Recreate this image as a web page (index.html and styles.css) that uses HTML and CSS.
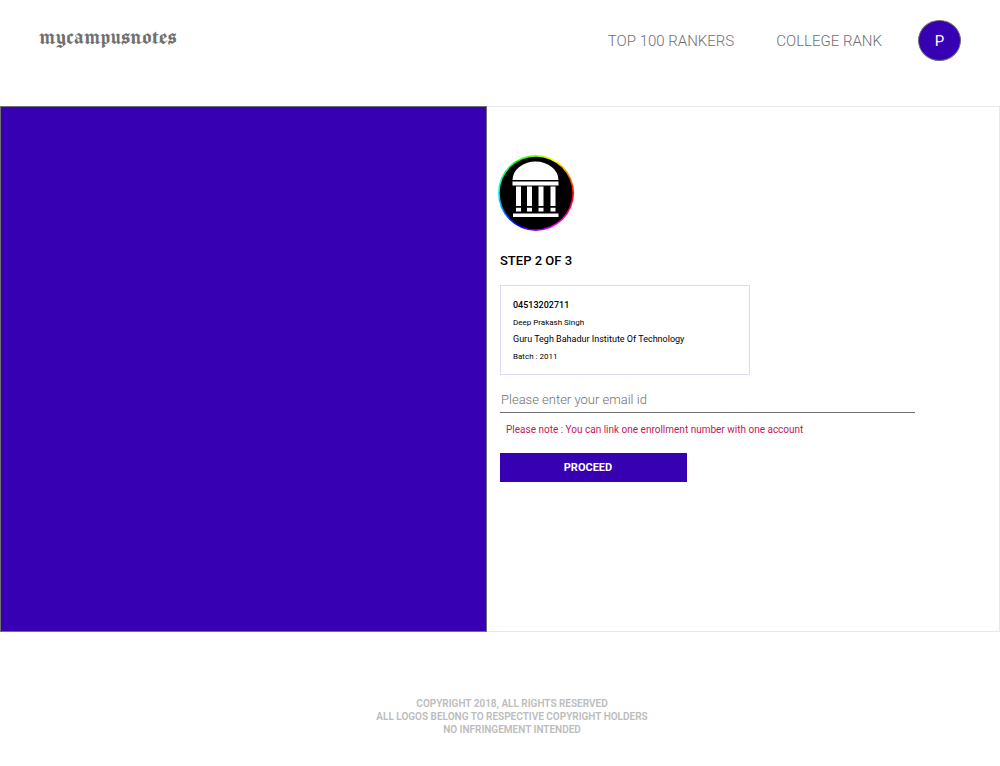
FILE: index.html
```html
<!DOCTYPE html>
<html lang="en">
<head>
<meta charset="utf-8">
<meta name="viewport" content="width=device-width, initial-scale=1">
<title>mycampusnotes</title>
<link rel="stylesheet" href="styles.css">
</head>
<body>
<header class="header">
  <a class="brand" href="#">mycampusnotes</a>
  <nav class="nav">
    <a class="nav-link" href="#">TOP 100 RANKERS</a>
    <a class="nav-link" href="#">COLLEGE RANK</a>
    <button class="avatar" type="button">P</button>
  </nav>
</header>
<main class="main">
  <div class="panel"></div>
  <section class="content">
    <div class="emblem">
      <svg class="emblem-icon" viewBox="0 0 76 76" aria-hidden="true">
        <circle cx="38" cy="38" r="36.300" fill="#000"/>
        <g fill="#fff">
          <path d="M14.500 25A23 18.500 0 0 1 60.500 25Z"/>
          <path d="M14.500 26.500h46v4h-46zM15 58.500h45.500v3.500H15z"/>
          <path d="M18 31.500h5v19.500h-5zM29 31.500h5v19.500h-5zM40.500 31.500h5v19.500h-5zM52.500 31.500h5v19.500h-5z"/>
          <path d="M18 52.700h5v3.800h-5zM29 52.700h5v3.800h-5zM40.500 52.700h5v3.800h-5zM52.500 52.700h5v3.800h-5z"/>
        </g>
      </svg>
    </div>
    <h1 class="step">STEP 2 OF 3</h1>
    <div class="card">
      <p class="line number">04513202711</p>
      <p class="line small">Deep Prakash Singh</p>
      <p class="line">Guru Tegh Bahadur Institute Of Technology</p>
      <p class="line small">Batch : 2011</p>
    </div>
    <form class="form">
      <input class="email" type="email" aria-label="Email id" placeholder="Please enter your email id">
      <p class="note">Please note : You can link one enrollment number with one account</p>
      <button class="proceed" type="button">PROCEED</button>
    </form>
  </section>
</main>
<footer class="footer">
  <p>COPYRIGHT 2018, ALL RIGHTS RESERVED</p>
  <p>ALL LOGOS BELONG TO RESPECTIVE COPYRIGHT HOLDERS</p>
  <p>NO INFRINGEMENT INTENDED</p>
</footer>
</body>
</html>
```
FILE: styles.css
```css
* {
  box-sizing: border-box;
}

body {
  margin: 0;
  background: #fff;
  color: #000;
  font-family: Roboto, "Liberation Sans", sans-serif;
}

p,
h1 {
  margin: 0;
}

.header {
  display: flex;
  justify-content: space-between;
  align-items: flex-start;
  padding: 20px 39px 45px;
}

.brand {
  padding-top: 4px;
  color: #707070;
  font: 400 25px/24px "Old English Text MT", "Manufacturing Consent", "Pirata One", UnifrakturCook, "Liberation Serif", serif;
  text-decoration: none;
}

.nav {
  display: flex;
  align-items: center;
}

.nav-link {
  margin-right: 42px;
  color: #707070;
  font-size: 15px;
  font-weight: 300;
  line-height: 20px;
  text-decoration: none;
}

.nav-link + .nav-link {
  margin-right: 36px;
}

.avatar {
  width: 43px;
  height: 41px;
  padding: 0;
  border: 1px solid #707070;
  border-radius: 50%;
  background: #3700b3;
  color: #fff;
  font: 400 15px/20px Roboto, sans-serif;
}

.main {
  display: grid;
  grid-template-columns: 487fr 513fr;
  min-height: 526px;
}

.panel {
  border: 1px solid #707070;
  background: #3700b3;
}

.content {
  padding: 48px 84px 48px 13px;
  border: 1px solid #e8e8e8;
  border-left: 0;
}

.emblem {
  width: 76px;
  height: 76px;
  margin-left: -2px;
  border-radius: 50%;
  background: conic-gradient(from 90deg, #f00, #f0f, #00f, #0ff, #0f0, #ff0, #f00);
}

.emblem-icon {
  display: block;
}

.step {
  margin: 20px 0 15px;
  font-size: 13px;
  font-weight: 500;
  line-height: 19px;
}

.card {
  width: 250px;
  max-width: 100%;
  padding: 11px 12px 9px;
  border: 1px solid #dedaf2;
}

.line {
  font-size: 9px;
  line-height: 17px;
}

.number {
  font-weight: 500;
}

.small {
  font-size: 8px;
}

.email {
  display: block;
  width: 100%;
  height: 28px;
  margin-top: 10px;
  padding: 2px 1px 0;
  border: 0;
  border-bottom: 1px solid #707070;
  background: none;
  font: 300 13px/20px Roboto, sans-serif;
}

.email::placeholder {
  color: #707070;
}

.note {
  padding: 9px 6px 15px;
  color: #c2185b;
  font-size: 10px;
  line-height: 16px;
}

.proceed {
  display: block;
  width: 187px;
  height: 29px;
  padding: 0 11px 0 0;
  border: 0;
  background: #3700b3;
  color: #fff;
  font: 700 11px/16px Roboto, sans-serif;
}

.footer {
  padding: 65px 0 30px 24px;
  color: #bcbcbc;
  font-size: 10px;
  font-weight: 600;
  line-height: 13px;
  text-align: center;
}
```
